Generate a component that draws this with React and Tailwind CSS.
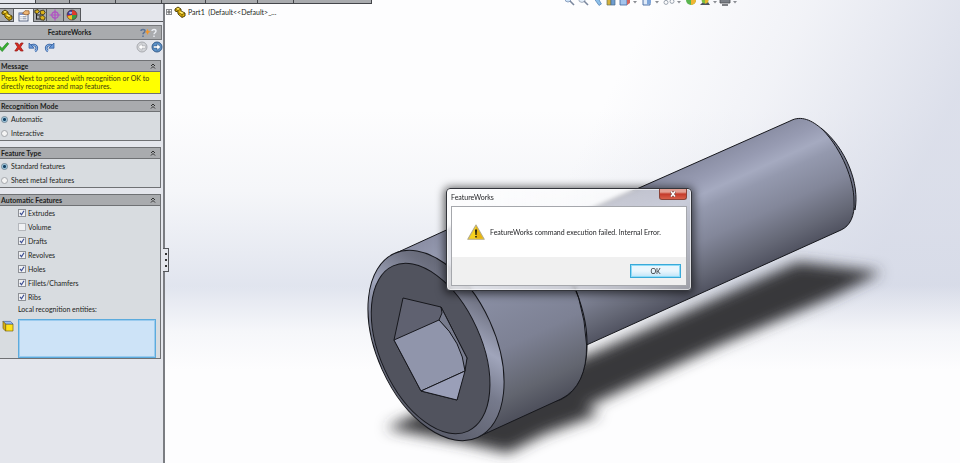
import { useState } from 'react';

const FEATURES = ['Extrudes', 'Volume', 'Drafts', 'Revolves', 'Holes', 'Fillets/Chamfers', 'Ribs'];

function PartIcon() {
    return (
        <svg viewBox="0 0 12 12" className="size-3 shrink-0">
            <path d="M1 3 L4 1 L7 3 L7 5 L11 7 L11 10 L8 11.5 L4 8 L4 6 L1 5 Z" fill="#e8b90c" stroke="#3d3100" strokeWidth="0.9" />
            <path d="M1.5 3.3 L4 4.5 L6.8 3.2 M4 4.5 L4 6 M5 7 L8 8.5 L11 7.2 M8 8.5 L8 11" fill="none" stroke="#5c4700" strokeWidth="0.7" />
            <path d="M2.4 3 L4 2 L5.6 3 L4 3.8 Z M5.5 6.4 L7 5.6 L9.8 7 L8 7.8 Z" fill="#fff07a" />
        </svg>
    );
}

function PropertyIcon() {
    return (
        <svg viewBox="0 0 12 12" className="size-3">
            <rect x="1" y="3" width="9" height="8" fill="#fff" stroke="#4a5878" strokeWidth="0.9" />
            <path d="M1 3h9v2H1z" fill="#7f93c4" />
            <path d="M2.5 6.8h1M2.5 8.8h1M4.5 6.8h4M4.5 8.8h4" stroke="#55617d" strokeWidth="0.8" />
            <path d="M4.5 3.4 L7 0.7 L11 0.8 L11.2 4 L8 5 Z" fill="#f0b877" stroke="#8a4f1b" strokeWidth="0.7" />
        </svg>
    );
}

function ConfigIcon() {
    return (
        <svg viewBox="0 0 12 12" className="size-3">
            <path d="M2.5 4.5 V10.5 M2.5 6 H7 M2.5 10 H6.5" fill="none" stroke="#222" strokeWidth="1" />
            <path d="M0.8 1.5 L4 0.6 L5.4 2.6 L3.4 4.6 L1 4 Z M6 2 L9.6 1 L11.2 3.6 L9.4 6 L6.6 5 Z M5.6 7.6 L8.8 6.4 L11.2 8.5 L10 11.2 L6.8 10.8 Z" fill="#dcb21a" stroke="#2e2a18" strokeWidth="0.8" />
        </svg>
    );
}

function TargetIcon() {
    return (
        <svg viewBox="0 0 12 12" className="size-3">
            <circle cx="6" cy="6" r="3.2" fill="none" stroke="#b04fc4" strokeWidth="1.2" />
            <path d="M6 0.5v11M0.5 6h11" stroke="#b04fc4" strokeWidth="1.2" />
        </svg>
    );
}

function AppearanceIcon() {
    return (
        <svg viewBox="0 0 12 12" className="size-3">
            <circle cx="6" cy="6" r="5" fill="#e23b2b" />
            <path d="M6 6 L1 6 A5 5 0 0 1 6 1 Z" fill="#3b3f9f" />
            <path d="M6 6 L11 6 A5 5 0 0 1 6 11 Z" fill="#3c9a46" />
            <path d="M6 6 L6 11 A5 5 0 0 1 1.3 7.5 Z" fill="#f0c423" />
            <circle cx="6" cy="6" r="5" fill="none" stroke="#433" strokeWidth="0.6" />
            <ellipse cx="4.6" cy="3.8" rx="1.6" ry="1.1" fill="#fff" opacity="0.6" />
        </svg>
    );
}

function CheckIcon() {
    return (
        <svg viewBox="0 0 12 12" className="size-3">
            <path d="M0.5 6.5 L2 5.2 L4 7.4 L9.2 1.5 L10.8 2.8 L4.2 10.6 Z" fill="#35b02f" stroke="#1a7a1d" strokeWidth="0.6" />
        </svg>
    );
}

function CrossIcon() {
    return (
        <svg viewBox="0 0 12 12" className="size-3">
            <path d="M2 2 L4.6 2 L6.2 4.4 L8 2 L10.2 2 L7.5 6 L10.2 10 L7.6 10 L6 7.7 L4.2 10 L1.8 10 L4.6 6 Z" fill="#d92a22" stroke="#941611" strokeWidth="0.7" />
        </svg>
    );
}

function UndoIcon({ flip }) {
    return (
        <svg viewBox="0 0 12 12" className={flip ? 'size-3 -scale-x-100' : 'size-3'}>
            <path d="M3.4 4.6 A3.4 3.2 0 1 1 7 10" fill="none" stroke="#2a5699" strokeWidth="2.6" />
            <path d="M3.4 4.6 A3.4 3.2 0 1 1 7 10" fill="none" stroke="#8cb6e8" strokeWidth="1.1" />
            <path d="M1 2 L1 7.2 L6.2 7.2 Z" fill="#6a9bdb" stroke="#2a5699" strokeWidth="0.7" />
        </svg>
    );
}

function ArrowIcon({ back }) {
    return (
        <svg viewBox="0 0 12 12" className={back ? 'size-3 -scale-x-100' : 'size-3'}>
            <circle cx="6" cy="6" r="5" fill={back ? '#d3d5d9' : '#5d93c9'} stroke={back ? '#a3a5a9' : '#2c5482'} strokeWidth="0.9" />
            <path d="M2.4 4.9 H6 V2.7 L9.8 6 L6 9.3 V7.1 H2.4 Z" fill="#fff" stroke={back ? '#9a9ca0' : '#244a78'} strokeWidth="0.5" />
        </svg>
    );
}

function Chevrons() {
    return (
        <svg viewBox="0 0 6 6" className="size-[6px]">
            <path d="M1 3 L3 1 L5 3 M1 5.5 L3 3.5 L5 5.5" fill="none" stroke="#222" strokeWidth="0.9" />
        </svg>
    );
}

function Section({ title, children }) {
    const [open, setOpen] = useState(true);
    return (
        <section className="mr-[2px] border-r border-b border-[#6f7174] bg-[#d8dce0]">
            <button
                type="button"
                onClick={() => setOpen(!open)}
                className="flex h-3 w-full items-center justify-between border-y border-[#6f7174] bg-[#a9abae] pr-1 pl-px font-bold"
            >
                {title}
                <Chevrons />
            </button>
            {open && children}
        </section>
    );
}

function Radio({ name, label, defaultChecked }) {
    return (
        <label className="flex h-[14px] items-center gap-[3px] pl-px">
            <input
                type="radio"
                name={name}
                defaultChecked={defaultChecked}
                className="size-[7px] appearance-none rounded-full border border-[#a3a6ab] bg-[#f4f4f4] checked:border-[#6f8494] checked:bg-[radial-gradient(#123f63_30%,#a9d4ea_60%)]"
            />
            {label}
        </label>
    );
}

function Check({ label, defaultChecked }) {
    return (
        <label className="flex h-[14px] items-center gap-[2px]">
            <span className="relative size-2">
                <input
                    type="checkbox"
                    defaultChecked={defaultChecked}
                    className="peer block size-2 appearance-none border border-[#b4b7bc] bg-[#f0f1f3] checked:border-[#8e9196]"
                />
                <svg viewBox="0 0 8 8" className="pointer-events-none absolute inset-0 hidden size-2 peer-checked:block">
                    <path d="M2 3.8 L3.5 5.8 L6 1.8" fill="none" stroke="#3d4f94" strokeWidth="1.2" />
                </svg>
            </span>
            {label}
        </label>
    );
}

function PropertyPanel() {
    return (
        <aside className="relative w-[165px] shrink-0 border-r-2 border-[#7b7d82] bg-[#e4e6ec]">
            <nav className="flex h-[22px] items-end border-b border-[#55575b]">
                <button type="button" aria-label="Feature tree" className="flex h-[13px] w-[14px] items-center justify-center border-t border-r border-[#55575b] bg-[#a9abae]"><PartIcon /></button>
                <button type="button" aria-label="Properties" className="-mb-px flex h-[14px] w-[19px] items-center justify-center border-t border-[#55575b] bg-[#eef0f4]"><PropertyIcon /></button>
                <button type="button" aria-label="Configurations" className="flex h-[13px] w-[14px] items-center justify-center border-t border-x border-[#55575b] bg-[#a9abae]"><ConfigIcon /></button>
                <button type="button" aria-label="Dimensions" className="flex h-[13px] w-[17px] items-center justify-center border-t border-r border-[#55575b] bg-[#a9abae]"><TargetIcon /></button>
                <button type="button" aria-label="Appearances" className="flex h-[13px] w-[17px] items-center justify-center border-t border-r border-[#55575b] bg-[#a9abae]"><AppearanceIcon /></button>
            </nav>

            <header className="mt-[3px] mr-px flex h-[15px] items-center border border-l-0 border-[#77797c] bg-[#a9abae] pr-1">
                <h1 className="flex-1 text-center font-bold">FeatureWorks</h1>
                <svg viewBox="0 0 18 10" className="h-[10px] w-[18px]">
                    <path d="M2 3 C2 1 6 1 6 3 C6 4.8 4 4.6 4 6.3 M4 7.6 V9" fill="none" stroke="#5b7396" strokeWidth="1.5" />
                    <path d="M8.4 0.8 L9.4 3 L11.6 3.8 L9.4 4.8 L8.6 7 L7.6 4.8 L6 4 L7.6 3 Z" fill="#f2962a" />
                    <path d="M13 3 C13 1 17 1 17 3 C17 4.8 15 4.6 15 6.3 M15 7.6 V9" fill="none" stroke="#e9ecf1" strokeWidth="1.4" />
                </svg>
            </header>

            <div className="flex h-5 items-start justify-between pt-px">
                <div className="-ml-[2px] flex gap-[3px]">
                    <button type="button" aria-label="OK"><CheckIcon /></button>
                    <button type="button" aria-label="Cancel"><CrossIcon /></button>
                    <button type="button" aria-label="Undo"><UndoIcon /></button>
                    <button type="button" aria-label="Redo"><UndoIcon flip /></button>
                </div>
                <div className="flex gap-[3px]">
                    <button type="button" aria-label="Back"><ArrowIcon back /></button>
                    <button type="button" aria-label="Next"><ArrowIcon /></button>
                </div>
            </div>

            <div className="flex flex-col gap-[6px]">
                <Section title="Message">
                    <p className="h-[21px] bg-[#ffff00] pt-[2px] pl-px leading-[8px] text-[#3c3c10]">
                        Press Next to proceed with recognition or OK to<br />directly recognize and map features.
                    </p>
                </Section>
                <Section title="Recognition Mode">
                    <Radio name="mode" label="Automatic" defaultChecked />
                    <Radio name="mode" label="Interactive" />
                </Section>
                <Section title="Feature Type">
                    <Radio name="type" label="Standard features" defaultChecked />
                    <Radio name="type" label="Sheet metal features" />
                </Section>
                <Section title="Automatic Features">
                    <div className="flex h-[98px] flex-col justify-between pl-[18px]">
                        {FEATURES.map((feature) => (
                            <Check key={feature} label={feature} defaultChecked={feature !== 'Volume'} />
                        ))}
                    </div>
                    <label htmlFor="entities" className="block pl-[18px] leading-[10px]">Local recognition entities:</label>
                    <div className="flex gap-1 pt-[5px] pr-1 pl-[2px]">
                        <svg viewBox="0 0 12 12" className="mt-px size-3 shrink-0">
                            <path d="M3.6 4 H11 V11 H3.6 Z" fill="#ffe21a" stroke="#7a6610" strokeWidth="0.7" />
                            <path d="M1 1.4 H8.6 L11 4 H3.6 Z" fill="#9dbdf0" stroke="#3c5f9e" strokeWidth="0.7" />
                            <path d="M1 1.4 L3.6 4 V11 L1 8.6 Z" fill="#d9b013" stroke="#7a6610" strokeWidth="0.7" />
                        </svg>
                        <textarea id="entities" className="h-[39px] min-w-0 flex-1 resize-none border border-[#5cabdd] bg-[#cde3f7] outline-1 -outline-offset-2 outline-[#9bcbee]" />
                    </div>
                </Section>
            </div>

            <div className="absolute top-[248px] -right-[6px] z-10 flex h-6 w-[6px] flex-col items-center justify-evenly border border-l-0 border-[#55575b] bg-[#e4e6ec]">
                <span className="size-[2px] bg-[#333]" />
                <span className="size-[2px] bg-[#333]" />
                <span className="size-[2px] bg-[#333]" />
            </div>
        </aside>
    );
}

function Bolt() {
    return (
        <svg viewBox="165 0 795 463" preserveAspectRatio="xMidYMid slice" className="absolute inset-0 h-full w-full">
            <defs>
                <linearGradient id="sky" gradientUnits="userSpaceOnUse" x1="0" y1="110" x2="0" y2="290">
                    <stop offset="0" stopColor="#fdfdfe" />
                    <stop offset="0.45" stopColor="#f5f6f9" />
                    <stop offset="1" stopColor="#e0e4ee" />
                </linearGradient>
                <linearGradient id="side" gradientUnits="userSpaceOnUse" x1="640" y1="30" x2="920" y2="170">
                    <stop offset="0" stopColor="#d6dae7" stopOpacity="0" />
                    <stop offset="0.45" stopColor="#d6dae7" stopOpacity="0.3" />
                    <stop offset="1" stopColor="#d6dae7" stopOpacity="0.85" />
                </linearGradient>
                <linearGradient id="floor" gradientUnits="userSpaceOnUse" x1="0" y1="285" x2="0" y2="370">
                    <stop offset="0" stopColor="#fdfdfe" stopOpacity="0" />
                    <stop offset="0.55" stopColor="#fdfdfe" stopOpacity="0.75" />
                    <stop offset="1" stopColor="#fdfdfe" />
                </linearGradient>
                <linearGradient id="shaft" gradientUnits="userSpaceOnUse" x1="790" y1="121" x2="840" y2="231">
                    <stop offset="0" stopColor="#8b8fa5" />
                    <stop offset="0.13" stopColor="#979bb2" />
                    <stop offset="0.25" stopColor="#a5aac0" />
                    <stop offset="0.36" stopColor="#9499ae" />
                    <stop offset="0.6" stopColor="#83879a" />
                    <stop offset="0.85" stopColor="#656876" />
                    <stop offset="1" stopColor="#505260" />
                </linearGradient>
                <linearGradient id="head" gradientUnits="userSpaceOnUse" x1="477" y1="216" x2="561" y2="399">
                    <stop offset="0" stopColor="#8b8fa5" />
                    <stop offset="0.2" stopColor="#a0a5bb" />
                    <stop offset="0.36" stopColor="#8a8fa4" />
                    <stop offset="0.65" stopColor="#7d8194" />
                    <stop offset="0.88" stopColor="#62656f" />
                    <stop offset="1" stopColor="#4d4f5b" />
                </linearGradient>
                <linearGradient id="rim" gradientUnits="userSpaceOnUse" x1="385" y1="270" x2="490" y2="430">
                    <stop offset="0" stopColor="#5a5d6a" />
                    <stop offset="0.15" stopColor="#6d7080" />
                    <stop offset="0.36" stopColor="#a0a5bb" />
                    <stop offset="0.55" stopColor="#767a8c" />
                    <stop offset="1" stopColor="#4f515d" />
                </linearGradient>
                <filter id="blur" x="-20%" y="-20%" width="140%" height="140%">
                    <feGaussianBlur stdDeviation="7" />
                </filter>
            </defs>

            <rect x="165" width="795" height="463" fill="url(#sky)" />
            <rect x="165" width="795" height="463" fill="url(#side)" />
            <rect x="165" y="285" width="795" height="178" fill="url(#floor)" />

            <g filter="url(#blur)" fill="#37373a">
                <path d="M798 262 L882 272 L832 297 L720 345 L610 396 L545 427 L480 400 L600 350 Z" />
                <path d="M386 428 L430 408 L560 395 L600 414 L545 434 L508 453 L465 443 Z" />
            </g>

            <g stroke="#16171c" strokeWidth="1" strokeLinejoin="round">
                <path d="M821 128 C846 148 860 184 855 210 L838 180 Z" fill="#73778a" />
                <path d="M560 223 L790 121 C801 115 812 120 823 130 C842 150 854 180 854 201 C855 216 850 226 841 230 L560 357 Z" fill="url(#shaft)" />
                <ellipse cx="519" cy="307.5" rx="101" ry="59" transform="rotate(65.6 519 307.5)" fill="url(#head)" className="[fill:#7d8194]" />
                <path d="M394 254 L477 216 Q520 216 560 262 Q582 300 586.6 345 Q587 386 561 399 L478 437 Z" fill="url(#head)" stroke="none" />
                <path d="M394 254 L477 216 M561 399 L478 437" />
                <path d="M560 254 Q584 296 586.6 345 Q587 386 561 399" fill="none" />
                <ellipse cx="436" cy="345.5" rx="101" ry="59" transform="rotate(65.6 436 345.5)" fill="url(#rim)" />
                <ellipse cx="430.6" cy="348.5" rx="90.7" ry="50.5" transform="rotate(65.6 430.6 348.5)" fill="#51535e" />
                <path d="M403 298 L441 307 L467 358 L457 400 L421 391 L394 340 Z" fill="#5f6170" />
                <path d="M441 307 L467 358 L465 371 Q460 340 439 320 L442 313 Z" fill="#777b8d" />
                <path d="M394 340 L439 320 Q462 342 465 371 L421 391 Z" fill="#9095ab" />
                <path d="M421 391 L465 371 L457 400 Z" fill="#9a9fb8" />
            </g>
        </svg>
    );
}

function Caret() {
    return (
        <svg viewBox="0 0 4 3" className="mt-1 h-[3px] w-1">
            <path d="M0 0 H4 L2 2.5 Z" fill="#8a8d93" />
        </svg>
    );
}

function ViewToolbar() {
    return (
        <div className="absolute -top-[6px] left-[398px] flex items-center gap-[2px]">
            <svg viewBox="0 0 12 12" className="size-3"><circle cx="5" cy="5" r="3" fill="#cfe3f8" stroke="#8fa4c2" /><path d="M7 7 L11 11" stroke="#7a879d" strokeWidth="1.6" /></svg>
            <svg viewBox="0 0 12 12" className="size-3"><circle cx="5" cy="5" r="3.4" fill="#e3eefa" stroke="#a3aebf" /><path d="M7 7 L11 11" stroke="#7a879d" strokeWidth="1.6" /></svg>
            <svg viewBox="0 0 12 12" className="size-3"><path d="M2 3 L8 11.4 L10.4 10 L7 4 Z" fill="#8dc0ea" stroke="#5c88b8" strokeWidth="0.8" /></svg>
            <svg viewBox="0 0 12 12" className="size-3"><path d="M2 4 H6 V11 H2 Z" fill="#d5b13b" stroke="#65705a" strokeWidth="0.7" /><path d="M6 4 H10 V11 H6 Z" fill="#6f9dce" stroke="#49678a" strokeWidth="0.7" /></svg>
            <svg viewBox="0 0 12 12" className="size-3"><path d="M1 3 H8 V11 H1 Z" fill="#a4c4ec" stroke="#4168a0" strokeWidth="0.8" /><path d="M8 4 L11 3 V9 L8 11 Z" fill="#d4645c" /></svg>
            <Caret />
            <svg viewBox="0 0 12 12" className="ml-[2px] size-3"><path d="M2 3 H9 V11 H2 Z" fill="#dfeaf8" stroke="#4168a0" strokeWidth="0.9" /><path d="M6 3 H10 V9 L6 11 Z" fill="#7fa6da" /></svg>
            <Caret />
            <svg viewBox="0 0 12 12" className="ml-[2px] size-3"><circle cx="3" cy="8.4" r="2" fill="none" stroke="#9aa3ae" /><circle cx="9" cy="7.4" r="2" fill="none" stroke="#9aa3ae" /></svg>
            <Caret />
            <svg viewBox="0 0 12 12" className="ml-[2px] size-3"><circle cx="6" cy="6" r="5" fill="#5bb54f" /><path d="M6 6 L11 6 A5 5 0 0 1 6 11 Z" fill="#f1b532" /><path d="M6 6 L6 1 A5 5 0 0 1 11 6 Z" fill="#d94a3a" /></svg>
            <svg viewBox="0 0 12 12" className="size-3"><path d="M1 11 L4 8 H9 L11 11 Z" fill="#4c5260" /><circle cx="6" cy="6" r="3.4" fill="#7dbf3f" /><path d="M6 6 h3.4 a3.4 3.4 0 0 1 -3.4 3.4 Z" fill="#e8b52f" /></svg>
            <Caret />
            <svg viewBox="0 0 12 12" className="size-3"><path d="M1 2 H11 V9 H1 Z" fill="#7c8087" stroke="#4a4d52" strokeWidth="0.8" /><path d="M3 11 H9" stroke="#4a4d52" strokeWidth="1.4" /></svg>
            <Caret />
        </div>
    );
}

function ErrorDialog({ onClose }) {
    return (
        <div
            role="alertdialog"
            aria-labelledby="dialog-title"
            aria-describedby="dialog-text"
            className="absolute top-[188px] left-[281px] w-[246px] rounded-[4px] border border-[#33353b] bg-linear-to-r from-white/75 to-white/40 px-1 pb-1 shadow-[0_1px_8px_2px_rgba(0,0,0,0.6),inset_0_0_0_1px_rgba(255,255,255,0.6)] backdrop-blur-[2px]"
        >
            <div className="flex h-[17px] items-center justify-between">
                <h2 id="dialog-title">FeatureWorks</h2>
                <button
                    type="button"
                    aria-label="Close"
                    onClick={onClose}
                    className="flex h-[11px] w-[28px] items-center justify-center self-start rounded-b-[3px] border border-t-0 border-[#8a4338] bg-linear-to-b from-[#e2a094] from-30% via-[#c4392a] via-50% to-[#d8604a]"
                >
                    <svg viewBox="0 0 8 8" className="size-2">
                        <path d="M2 1.5 L6 6.5 M6 1.5 L2 6.5" stroke="#6d3a36" strokeWidth="2.8" />
                        <path d="M2 1.5 L6 6.5 M6 1.5 L2 6.5" stroke="#fff" strokeWidth="1.6" />
                    </svg>
                </button>
            </div>
            <div className="border border-[#a5a7ac] bg-[#f0f0f0]">
                <div className="flex h-[50px] items-center gap-[5px] bg-white pl-[15px]">
                    <svg viewBox="0 0 18 16" className="h-4 w-[18px]">
                        <path d="M9 1 L17.2 15.2 H0.8 Z" fill="#f7d21e" stroke="#b3a988" strokeWidth="1.1" strokeLinejoin="round" />
                        <path d="M9 2 L16 14.5 H9 Z" fill="#e8b40f" />
                        <path d="M8 5.5 H10 L9.6 11 H8.4 Z M8.2 12 H9.8 V13.6 H8.2 Z" fill="#1c1a10" />
                    </svg>
                    <p id="dialog-text">FeatureWorks command execution failed. Internal Error.</p>
                </div>
                <div className="flex h-7 items-center justify-end pr-[5px]">
                    <button
                        type="button"
                        onClick={onClose}
                        className="h-[14px] w-[51px] border border-[#3aa9d8] bg-linear-to-b from-[#eaf6fd] from-50% to-[#bfe4f8] leading-[12px] shadow-[inset_0_0_0_1px_#8fdcf8]"
                    >
                        OK
                    </button>
                </div>
            </div>
        </div>
    );
}

export default function App() {
    const [showError, setShowError] = useState(true);

    return (
        <div className="relative flex min-h-screen overflow-hidden bg-white font-['Lato',sans-serif] text-[7px] leading-[9px] text-[#1c1d20]">
            <div className="absolute top-0 left-0 z-20 flex h-1 w-[372px] border-r border-b border-[#44464a] bg-[#a9abae]">
                <span className="w-[35px] bg-[#e4e6ec]" />
                <span className="w-[34px] border-l border-[#44464a]" />
                <span className="w-[46px] border-l border-[#44464a]" />
                <span className="w-[46px] border-l border-[#44464a]" />
                <span className="w-[44px] border-l border-[#44464a]" />
                <span className="w-[52px] border-l border-[#44464a]" />
                <span className="w-[36px] border-l border-[#44464a]" />
                <span className="flex-1 border-l border-[#44464a]" />
            </div>

            <PropertyPanel />

            <main className="relative flex-1">
                <Bolt />
                <ViewToolbar />
                <div className="relative flex items-center gap-[2px] pt-[6px] pl-px">
                    <button type="button" aria-label="Expand" className="flex size-[6px] items-center justify-center border border-[#8a8c90] bg-white">
                        <svg viewBox="0 0 4 4" className="size-1"><path d="M0 2h4M2 0v4" stroke="#333" strokeWidth="0.8" /></svg>
                    </button>
                    <PartIcon />
                    <span className="whitespace-pre">Part1  (Default&lt;&lt;Default&gt;_...</span>
                </div>
                {showError && <ErrorDialog onClose={() => setShowError(false)} />}
            </main>
        </div>
    );
}
